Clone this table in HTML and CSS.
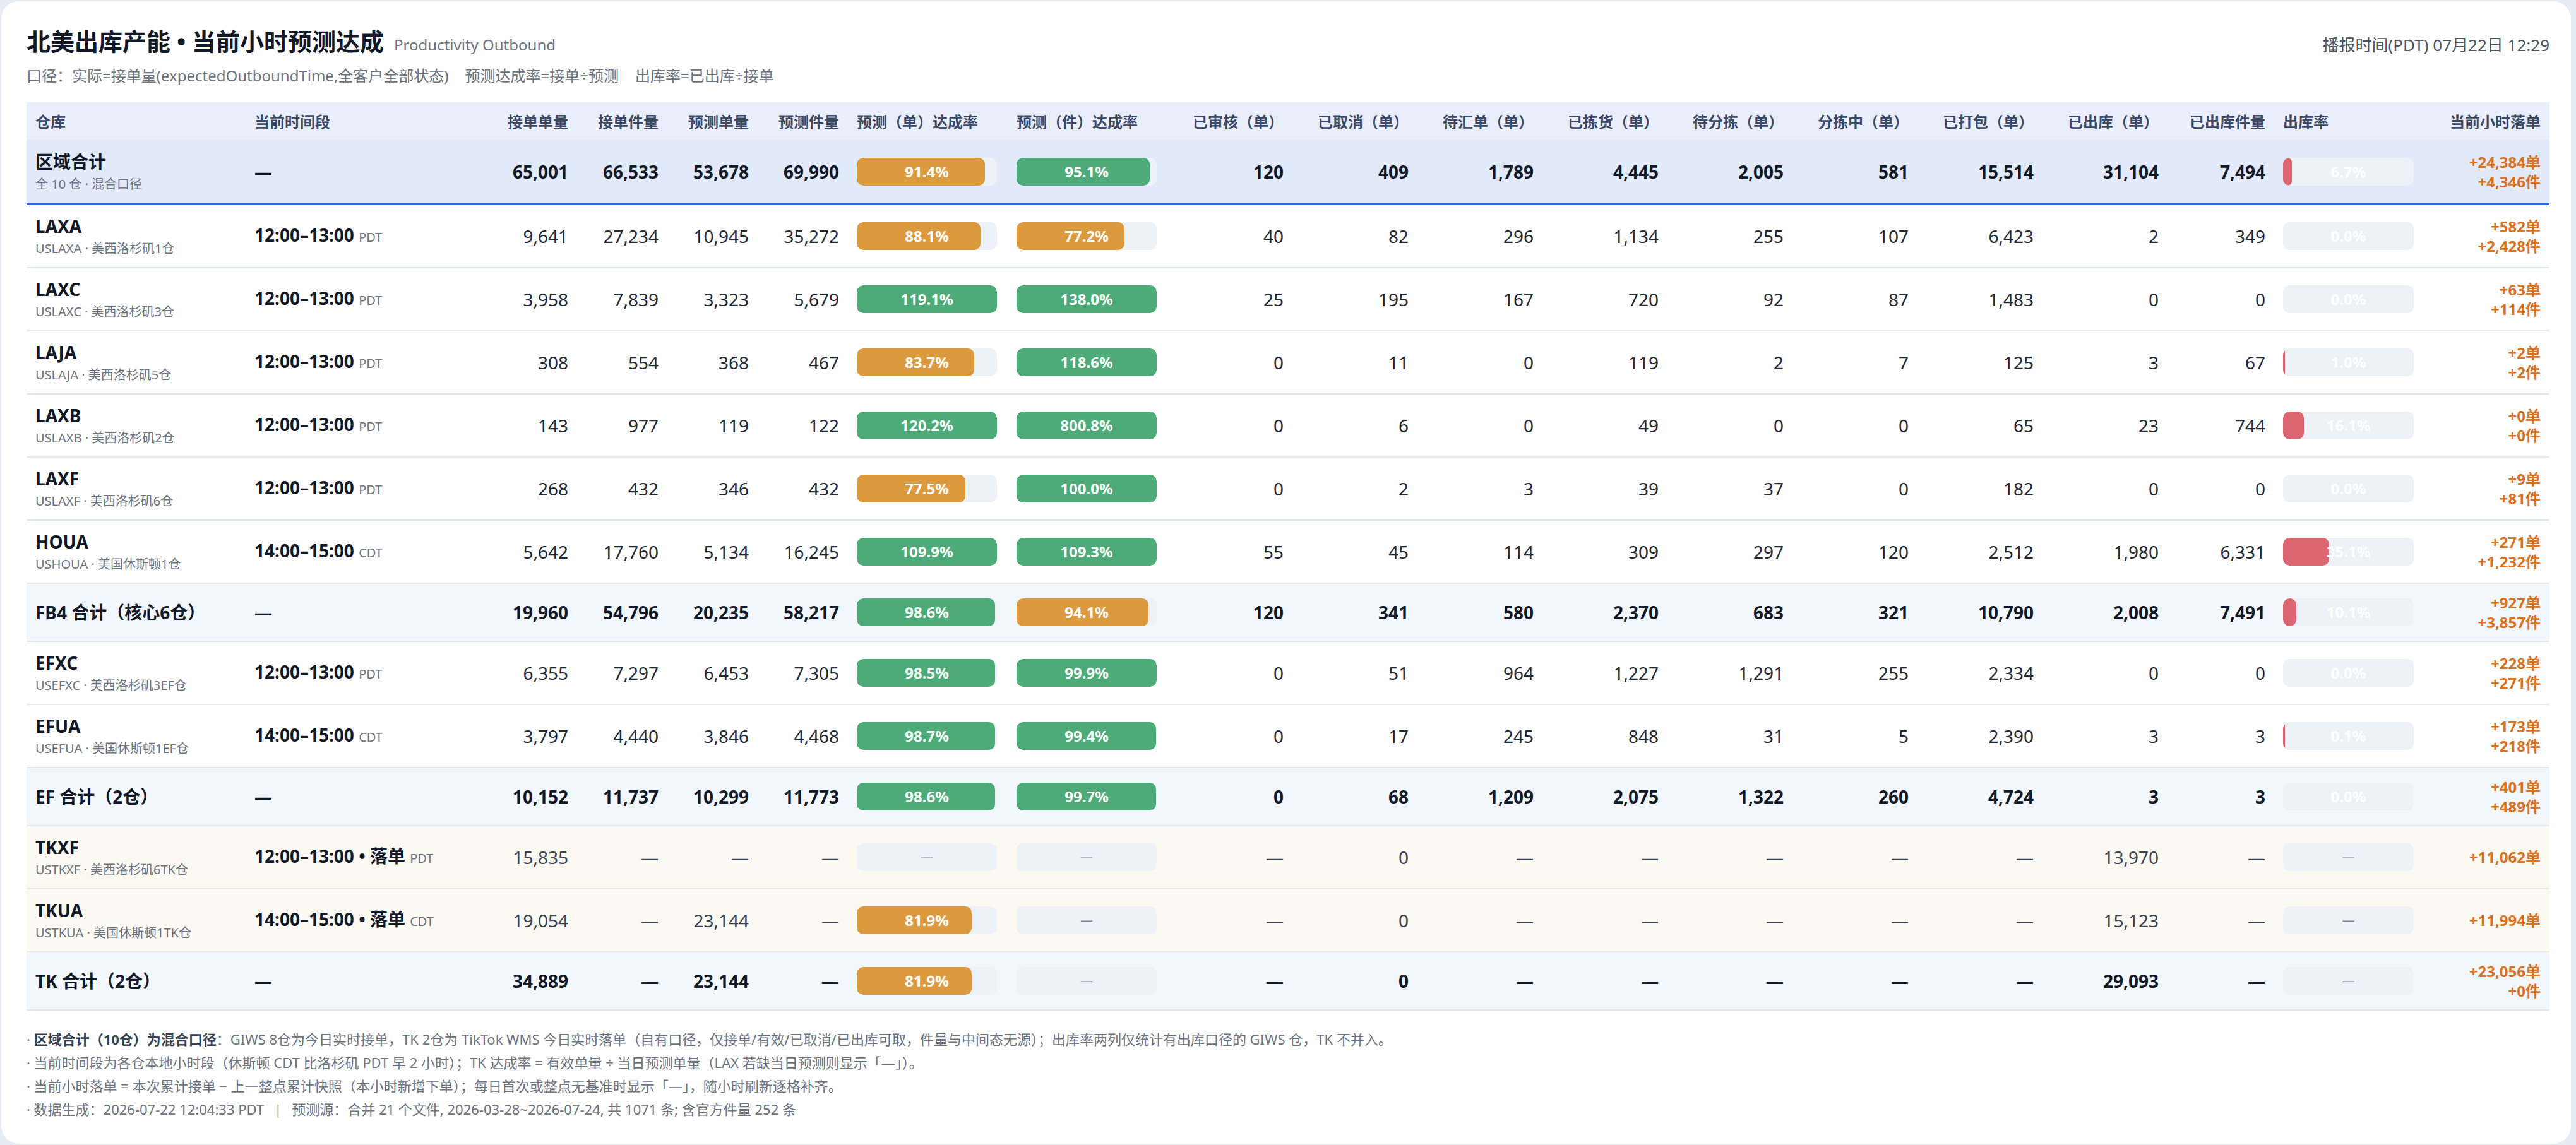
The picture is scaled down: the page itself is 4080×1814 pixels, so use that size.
FILE: index.html
```html
<!DOCTYPE html>
<html lang="zh-CN">
<head>
<meta charset="utf-8">
<title>北美出库产能 • 当前小时预测达成</title>
<link rel="stylesheet" href="styles.css">
</head>
<body>
<main class="card">
  <header class="top">
    <div class="titles">
      <h1 class="title">北美出库产能 • 当前小时预测达成<span class="en">Productivity Outbound</span></h1>
      <p class="subtitle"><span>口径：实际=接单量(expectedOutboundTime,全客户全部状态)</span><span>预测达成率=接单÷预测</span><span>出库率=已出库÷接单</span></p>
    </div>
    <div class="stamp">播报时间(PDT) 07月22日 12:29</div>
  </header>

  <table class="grid">
    <colgroup>
      <col class="w-name"><col class="w-time">
      <col class="w-num"><col class="w-num"><col class="w-num"><col class="w-num">
      <col class="w-bar"><col class="w-bar">
      <col class="w-mid"><col class="w-mid"><col class="w-mid"><col class="w-mid">
      <col class="w-mid"><col class="w-mid"><col class="w-mid"><col class="w-mid">
      <col class="w-qty"><col class="w-rate"><col class="w-drop">
    </colgroup>
    <thead>
      <tr>
        <th class="l">仓库</th><th class="l">当前时间段</th>
        <th>接单单量</th><th>接单件量</th><th>预测单量</th><th>预测件量</th>
        <th class="l">预测（单）达成率</th><th class="l">预测（件）达成率</th>
        <th>已审核（单）</th><th>已取消（单）</th><th>待汇单（单）</th><th>已拣货（单）</th>
        <th>待分拣（单）</th><th>分拣中（单）</th><th>已打包（单）</th><th>已出库（单）</th>
        <th>已出库件量</th><th class="l">出库率</th><th>当前小时落单</th>
      </tr>
    </thead>
    <tbody>
      <tr class="row region">
        <td><div class="wh">区域合计</div><div class="code">全 10 仓 · 混合口径</div></td>
        <td class="time">—</td>
        <td class="n">65,001</td><td class="n">66,533</td><td class="n">53,678</td><td class="n">69,990</td>
        <td><div class="bar"><div class="fill orange" style="width:91.4%"></div><span class="bt">91.4%</span></div></td>
        <td><div class="bar"><div class="fill green" style="width:95.1%"></div><span class="bt">95.1%</span></div></td>
        <td class="n">120</td><td class="n">409</td><td class="n">1,789</td><td class="n">4,445</td>
        <td class="n">2,005</td><td class="n">581</td><td class="n">15,514</td><td class="n">31,104</td>
        <td class="n">7,494</td>
        <td><div class="bar sm"><div class="fill red" style="width:6.7%"></div><span class="bt">6.7%</span></div></td>
        <td class="drop"><div>+24,384单</div><div>+4,346件</div></td>
      </tr>

      <tr class="row">
        <td><div class="wh">LAXA</div><div class="code">USLAXA · 美西洛杉矶1仓</div></td>
        <td class="time"><b>12:00–13:00</b> <span class="tz">PDT</span></td>
        <td class="n">9,641</td><td class="n">27,234</td><td class="n">10,945</td><td class="n">35,272</td>
        <td><div class="bar"><div class="fill orange" style="width:88.1%"></div><span class="bt">88.1%</span></div></td>
        <td><div class="bar"><div class="fill orange" style="width:77.2%"></div><span class="bt">77.2%</span></div></td>
        <td class="n">40</td><td class="n">82</td><td class="n">296</td><td class="n">1,134</td>
        <td class="n">255</td><td class="n">107</td><td class="n">6,423</td><td class="n">2</td>
        <td class="n">349</td>
        <td><div class="bar sm"><span class="bt">0.0%</span></div></td>
        <td class="drop"><div>+582单</div><div>+2,428件</div></td>
      </tr>

      <tr class="row">
        <td><div class="wh">LAXC</div><div class="code">USLAXC · 美西洛杉矶3仓</div></td>
        <td class="time"><b>12:00–13:00</b> <span class="tz">PDT</span></td>
        <td class="n">3,958</td><td class="n">7,839</td><td class="n">3,323</td><td class="n">5,679</td>
        <td><div class="bar"><div class="fill green" style="width:100%"></div><span class="bt">119.1%</span></div></td>
        <td><div class="bar"><div class="fill green" style="width:100%"></div><span class="bt">138.0%</span></div></td>
        <td class="n">25</td><td class="n">195</td><td class="n">167</td><td class="n">720</td>
        <td class="n">92</td><td class="n">87</td><td class="n">1,483</td><td class="n">0</td>
        <td class="n">0</td>
        <td><div class="bar sm"><span class="bt">0.0%</span></div></td>
        <td class="drop"><div>+63单</div><div>+114件</div></td>
      </tr>

      <tr class="row">
        <td><div class="wh">LAJA</div><div class="code">USLAJA · 美西洛杉矶5仓</div></td>
        <td class="time"><b>12:00–13:00</b> <span class="tz">PDT</span></td>
        <td class="n">308</td><td class="n">554</td><td class="n">368</td><td class="n">467</td>
        <td><div class="bar"><div class="fill orange" style="width:83.7%"></div><span class="bt">83.7%</span></div></td>
        <td><div class="bar"><div class="fill green" style="width:100%"></div><span class="bt">118.6%</span></div></td>
        <td class="n">0</td><td class="n">11</td><td class="n">0</td><td class="n">119</td>
        <td class="n">2</td><td class="n">7</td><td class="n">125</td><td class="n">3</td>
        <td class="n">67</td>
        <td><div class="bar sm"><div class="fill red" style="width:1.0%"></div><span class="bt">1.0%</span></div></td>
        <td class="drop"><div>+2单</div><div>+2件</div></td>
      </tr>

      <tr class="row">
        <td><div class="wh">LAXB</div><div class="code">USLAXB · 美西洛杉矶2仓</div></td>
        <td class="time"><b>12:00–13:00</b> <span class="tz">PDT</span></td>
        <td class="n">143</td><td class="n">977</td><td class="n">119</td><td class="n">122</td>
        <td><div class="bar"><div class="fill green" style="width:100%"></div><span class="bt">120.2%</span></div></td>
        <td><div class="bar"><div class="fill green" style="width:100%"></div><span class="bt">800.8%</span></div></td>
        <td class="n">0</td><td class="n">6</td><td class="n">0</td><td class="n">49</td>
        <td class="n">0</td><td class="n">0</td><td class="n">65</td><td class="n">23</td>
        <td class="n">744</td>
        <td><div class="bar sm"><div class="fill red" style="width:16.1%"></div><span class="bt">16.1%</span></div></td>
        <td class="drop"><div>+0单</div><div>+0件</div></td>
      </tr>

      <tr class="row">
        <td><div class="wh">LAXF</div><div class="code">USLAXF · 美西洛杉矶6仓</div></td>
        <td class="time"><b>12:00–13:00</b> <span class="tz">PDT</span></td>
        <td class="n">268</td><td class="n">432</td><td class="n">346</td><td class="n">432</td>
        <td><div class="bar"><div class="fill orange" style="width:77.5%"></div><span class="bt">77.5%</span></div></td>
        <td><div class="bar"><div class="fill green" style="width:100%"></div><span class="bt">100.0%</span></div></td>
        <td class="n">0</td><td class="n">2</td><td class="n">3</td><td class="n">39</td>
        <td class="n">37</td><td class="n">0</td><td class="n">182</td><td class="n">0</td>
        <td class="n">0</td>
        <td><div class="bar sm"><span class="bt">0.0%</span></div></td>
        <td class="drop"><div>+9单</div><div>+81件</div></td>
      </tr>

      <tr class="row">
        <td><div class="wh">HOUA</div><div class="code">USHOUA · 美国休斯顿1仓</div></td>
        <td class="time"><b>14:00–15:00</b> <span class="tz">CDT</span></td>
        <td class="n">5,642</td><td class="n">17,760</td><td class="n">5,134</td><td class="n">16,245</td>
        <td><div class="bar"><div class="fill green" style="width:100%"></div><span class="bt">109.9%</span></div></td>
        <td><div class="bar"><div class="fill green" style="width:100%"></div><span class="bt">109.3%</span></div></td>
        <td class="n">55</td><td class="n">45</td><td class="n">114</td><td class="n">309</td>
        <td class="n">297</td><td class="n">120</td><td class="n">2,512</td><td class="n">1,980</td>
        <td class="n">6,331</td>
        <td><div class="bar sm"><div class="fill red" style="width:35.1%"></div><span class="bt">35.1%</span></div></td>
        <td class="drop"><div>+271单</div><div>+1,232件</div></td>
      </tr>

      <tr class="row sub">
        <td><div class="wh">FB4 合计（核心6仓）</div></td>
        <td class="time">—</td>
        <td class="n">19,960</td><td class="n">54,796</td><td class="n">20,235</td><td class="n">58,217</td>
        <td><div class="bar"><div class="fill green" style="width:98.6%"></div><span class="bt">98.6%</span></div></td>
        <td><div class="bar"><div class="fill orange" style="width:94.1%"></div><span class="bt">94.1%</span></div></td>
        <td class="n">120</td><td class="n">341</td><td class="n">580</td><td class="n">2,370</td>
        <td class="n">683</td><td class="n">321</td><td class="n">10,790</td><td class="n">2,008</td>
        <td class="n">7,491</td>
        <td><div class="bar sm"><div class="fill red" style="width:10.1%"></div><span class="bt">10.1%</span></div></td>
        <td class="drop"><div>+927单</div><div>+3,857件</div></td>
      </tr>

      <tr class="row">
        <td><div class="wh">EFXC</div><div class="code">USEFXC · 美西洛杉矶3EF仓</div></td>
        <td class="time"><b>12:00–13:00</b> <span class="tz">PDT</span></td>
        <td class="n">6,355</td><td class="n">7,297</td><td class="n">6,453</td><td class="n">7,305</td>
        <td><div class="bar"><div class="fill green" style="width:98.5%"></div><span class="bt">98.5%</span></div></td>
        <td><div class="bar"><div class="fill green" style="width:99.9%"></div><span class="bt">99.9%</span></div></td>
        <td class="n">0</td><td class="n">51</td><td class="n">964</td><td class="n">1,227</td>
        <td class="n">1,291</td><td class="n">255</td><td class="n">2,334</td><td class="n">0</td>
        <td class="n">0</td>
        <td><div class="bar sm"><span class="bt">0.0%</span></div></td>
        <td class="drop"><div>+228单</div><div>+271件</div></td>
      </tr>

      <tr class="row">
        <td><div class="wh">EFUA</div><div class="code">USEFUA · 美国休斯顿1EF仓</div></td>
        <td class="time"><b>14:00–15:00</b> <span class="tz">CDT</span></td>
        <td class="n">3,797</td><td class="n">4,440</td><td class="n">3,846</td><td class="n">4,468</td>
        <td><div class="bar"><div class="fill green" style="width:98.7%"></div><span class="bt">98.7%</span></div></td>
        <td><div class="bar"><div class="fill green" style="width:99.4%"></div><span class="bt">99.4%</span></div></td>
        <td class="n">0</td><td class="n">17</td><td class="n">245</td><td class="n">848</td>
        <td class="n">31</td><td class="n">5</td><td class="n">2,390</td><td class="n">3</td>
        <td class="n">3</td>
        <td><div class="bar sm"><div class="fill red" style="width:0.1%"></div><span class="bt">0.1%</span></div></td>
        <td class="drop"><div>+173单</div><div>+218件</div></td>
      </tr>

      <tr class="row sub">
        <td><div class="wh">EF 合计（2仓）</div></td>
        <td class="time">—</td>
        <td class="n">10,152</td><td class="n">11,737</td><td class="n">10,299</td><td class="n">11,773</td>
        <td><div class="bar"><div class="fill green" style="width:98.6%"></div><span class="bt">98.6%</span></div></td>
        <td><div class="bar"><div class="fill green" style="width:99.7%"></div><span class="bt">99.7%</span></div></td>
        <td class="n">0</td><td class="n">68</td><td class="n">1,209</td><td class="n">2,075</td>
        <td class="n">1,322</td><td class="n">260</td><td class="n">4,724</td><td class="n">3</td>
        <td class="n">3</td>
        <td><div class="bar sm"><span class="bt">0.0%</span></div></td>
        <td class="drop"><div>+401单</div><div>+489件</div></td>
      </tr>

      <tr class="row tk">
        <td><div class="wh">TKXF</div><div class="code">USTKXF · 美西洛杉矶6TK仓</div></td>
        <td class="time"><b>12:00–13:00 • 落单</b> <span class="tz">PDT</span></td>
        <td class="n">15,835</td><td class="n">—</td><td class="n">—</td><td class="n">—</td>
        <td><div class="bar"><span class="bd">—</span></div></td>
        <td><div class="bar"><span class="bd">—</span></div></td>
        <td class="n">—</td><td class="n">0</td><td class="n">—</td><td class="n">—</td>
        <td class="n">—</td><td class="n">—</td><td class="n">—</td><td class="n">13,970</td>
        <td class="n">—</td>
        <td><div class="bar sm"><span class="bd">—</span></div></td>
        <td class="drop"><div>+11,062单</div></td>
      </tr>

      <tr class="row tk">
        <td><div class="wh">TKUA</div><div class="code">USTKUA · 美国休斯顿1TK仓</div></td>
        <td class="time"><b>14:00–15:00 • 落单</b> <span class="tz">CDT</span></td>
        <td class="n">19,054</td><td class="n">—</td><td class="n">23,144</td><td class="n">—</td>
        <td><div class="bar"><div class="fill orange" style="width:81.9%"></div><span class="bt">81.9%</span></div></td>
        <td><div class="bar"><span class="bd">—</span></div></td>
        <td class="n">—</td><td class="n">0</td><td class="n">—</td><td class="n">—</td>
        <td class="n">—</td><td class="n">—</td><td class="n">—</td><td class="n">15,123</td>
        <td class="n">—</td>
        <td><div class="bar sm"><span class="bd">—</span></div></td>
        <td class="drop"><div>+11,994单</div></td>
      </tr>

      <tr class="row sub">
        <td><div class="wh">TK 合计（2仓）</div></td>
        <td class="time">—</td>
        <td class="n">34,889</td><td class="n">—</td><td class="n">23,144</td><td class="n">—</td>
        <td><div class="bar"><div class="fill orange" style="width:81.9%"></div><span class="bt">81.9%</span></div></td>
        <td><div class="bar"><span class="bd">—</span></div></td>
        <td class="n">—</td><td class="n">0</td><td class="n">—</td><td class="n">—</td>
        <td class="n">—</td><td class="n">—</td><td class="n">—</td><td class="n">29,093</td>
        <td class="n">—</td>
        <td><div class="bar sm"><span class="bd">—</span></div></td>
        <td class="drop"><div>+23,056单</div><div>+0件</div></td>
      </tr>
    </tbody>
  </table>

  <section class="notes">
    <p>· <b>区域合计（10仓）为混合口径</b>：GIWS 8仓为今日实时接单，TK 2仓为 TikTok WMS 今日实时落单（自有口径，仅接单/有效/已取消/已出库可取，件量与中间态无源）；出库率两列仅统计有出库口径的 GIWS 仓，TK 不并入。</p>
    <p>· 当前时间段为各仓本地小时段（休斯顿 CDT 比洛杉矶 PDT 早 2 小时）；TK 达成率 = 有效单量 ÷ 当日预测单量（LAX 若缺当日预测则显示「—」）。</p>
    <p>· 当前小时落单 = 本次累计接单 − 上一整点累计快照（本小时新增下单）；每日首次或整点无基准时显示「—」，随小时刷新逐格补齐。</p>
    <p>· 数据生成：2026-07-22 12:04:33 PDT<span class="sep">|</span>预测源：合并 21 个文件, 2026-03-28~2026-07-24, 共 1071 条; 含官方件量 252 条</p>
  </section>
</main>
</body>
</html>
```

FILE: styles.css
```css
* { box-sizing: border-box; }

html, body {
  margin: 0;
  padding: 0;
  background: #e7ebf3;
}

body {
  font-family: "Noto Sans", "Noto Sans CJK SC", sans-serif;
  color: #111827;
  padding: 2px 8px 2px 2px;
}

.card {
  background: #ffffff;
  border-radius: 28px;
  min-height: 1810px;
  padding: 38px 34px 30px 40px;
}

/* ---------- header ---------- */
.top {
  display: flex;
  justify-content: space-between;
  align-items: flex-start;
}

.title {
  margin: 0;
  font-size: 38px;
  line-height: 50px;
  font-weight: 700;
  color: #111827;
  white-space: nowrap;
}

.title .en {
  margin-left: 16px;
  font-size: 24px;
  font-weight: 400;
  color: #6b7280;
}

.subtitle {
  margin: 9px 0 0;
  display: flex;
  gap: 26px;
  font-size: 24px;
  line-height: 30px;
  color: #6b7280;
  white-space: nowrap;
}

.stamp {
  margin-top: 6px;
  font-size: 26px;
  line-height: 50px;
  color: #4b5563;
  white-space: nowrap;
}

/* ---------- table ---------- */
.grid {
  margin-top: 27px;
  width: 100%;
  table-layout: fixed;
  border-collapse: collapse;
}

.w-name { width: 347px; }
.w-time { width: 382px; }
.w-num  { width: 143px; }
.w-bar  { width: 253px; }
.w-mid  { width: 198px; }
.w-qty  { width: 169px; }
.w-rate { width: 254px; }
.w-drop { width: 182px; }

.grid th {
  height: 60px;
  padding: 0 14px;
  background: #eaeefa;
  border-bottom: 1px solid #dfe5f1;
  font-size: 24px;
  font-weight: 700;
  color: #3b4966;
  text-align: right;
  white-space: nowrap;
}

.grid th.l { text-align: left; }

.grid td {
  padding: 15px 14px;
  vertical-align: middle;
  white-space: nowrap;
  border-bottom: 2px solid #e3e8f1;
  font-size: 28px;
  line-height: 36px;
  color: #1f2937;
}

.row.region td {
  background: #e2e9f9;
  border-bottom: 4px solid #2f6ae0;
}

.row.sub td {
  background: #f2f6fd;
  padding-top: 14px;
  padding-bottom: 14px;
}

.row.tk td { background: #fcf8f2; }

.wh {
  font-size: 28px;
  line-height: 36px;
  font-weight: 700;
  color: #111827;
}

.code {
  margin-top: 4px;
  font-size: 20px;
  line-height: 28px;
  color: #6b7280;
}

.time b {
  font-weight: 700;
  color: #111827;
}

.row.region .time,
.row.sub .time {
  font-weight: 700;
  color: #111827;
}

.tz {
  font-size: 20px;
  color: #6b7280;
}

.n { text-align: right; }

.row.region .n,
.row.sub .n {
  font-weight: 700;
  color: #111827;
}

.row.tk .n { color: #374151; }

/* ---------- bars ---------- */
.bar {
  position: relative;
  width: 222px;
  height: 44px;
  border-radius: 10px;
  background: #edf1f8;
  overflow: hidden;
}

.bar.sm { width: 207px; }

.fill {
  position: absolute;
  left: 0;
  top: 0;
  bottom: 0;
  border-radius: 10px;
}

.fill.orange { background: #dc9a3f; }
.fill.green  { background: #4cab78; }
.fill.red    { background: #dc6572; min-width: 3px; }

.bt,
.bd {
  position: absolute;
  inset: 0;
  display: flex;
  align-items: center;
  justify-content: center;
}

.bt {
  font-size: 24px;
  font-weight: 700;
  color: #ffffff;
}

.bd {
  font-size: 20px;
  color: #7d8799;
}

/* ---------- drop ---------- */
.drop {
  text-align: right;
}

.grid td.drop {
  font-size: 24px;
  line-height: 31px;
  font-weight: 700;
  color: #d9721f;
}

/* ---------- notes ---------- */
.notes {
  margin-top: 27px;
  font-size: 22px;
  line-height: 37px;
  color: #6b7280;
}

.notes p {
  margin: 0;
  white-space: nowrap;
}

.notes b {
  font-weight: 700;
  color: #374151;
}

.sep {
  margin: 0 16px;
  color: #c9a97a;
}
```
